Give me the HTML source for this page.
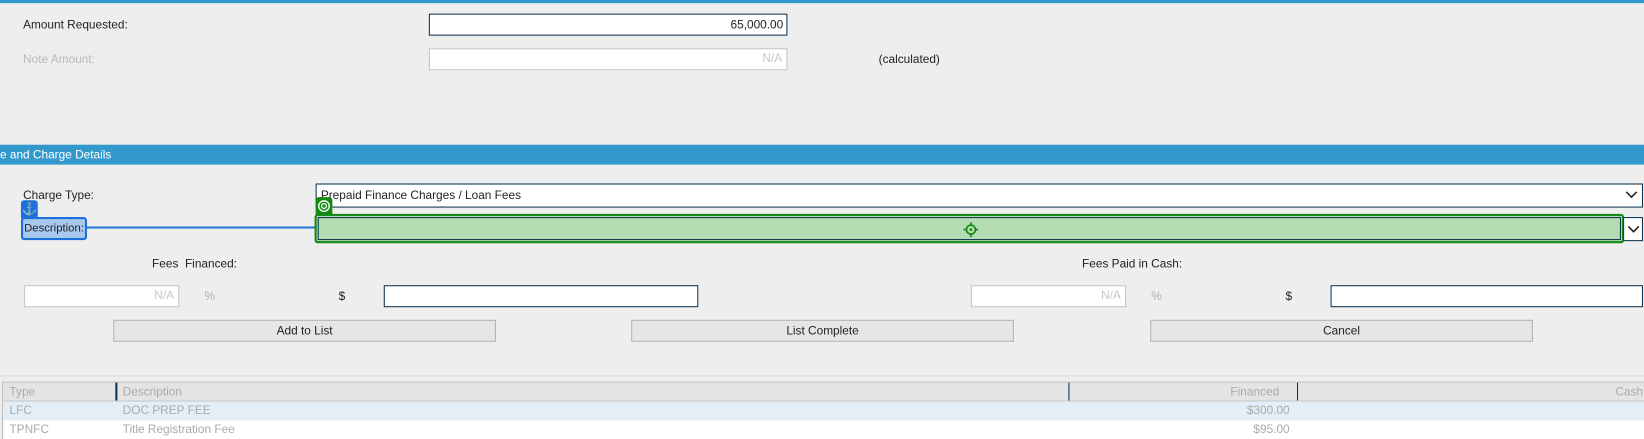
<!DOCTYPE html>
<html><head><style>
html,body{margin:0;padding:0;background:#eeeeee;overflow:hidden;width:1644px;height:437px}
#w{position:absolute;left:0;top:0;width:1568px;height:417px;transform:scale(1.0485);transform-origin:0 0;font-family:"Segoe UI","Liberation Sans",sans-serif;font-size:11.3px;color:#222}
.a{position:absolute}
.in{position:absolute;background:#fff;border:1px solid #0c3350;box-sizing:border-box}
.dis{position:absolute;background:#fff;border:1px solid #c4c4c4;box-sizing:border-box;color:#c8c8c8;text-align:right;padding-right:4px;line-height:19px}
.btn{position:absolute;background:#e6e6e6;border:1px solid #b4b4b4;box-sizing:border-box;text-align:center;line-height:20px;height:21px}
.g{color:#b0b0b0}
</style></head><body><div id="w">
<div class="a" style="left:0;top:0;width:1568px;height:3px;background:#3399cc"></div>
<div class="a" style="left:22px;top:18px">Amount Requested:</div>
<div class="in" style="left:409px;top:13px;width:342px;height:21px;text-align:right;padding-right:3px;line-height:20px">65,000.00</div>
<div class="a" style="left:22px;top:51px;color:#b8b8b8">Note Amount:</div>
<div class="dis" style="left:409px;top:46px;width:342px;height:21px">N/A</div>
<div class="a" style="left:838px;top:51px">(calculated)</div>

<div class="a" style="left:0;top:138px;width:1568px;height:19px;background:#3399cc;color:#fff;line-height:20px">e and Charge Details</div>

<div class="a" style="left:22px;top:181px">Charge Type:</div>
<div class="in" style="left:301px;top:175px;width:1266px;height:23px;line-height:22px;padding-left:4px">Prepaid Finance Charges / Loan Fees
<svg class="a" style="right:4px;top:6px" width="12" height="8"><path d="M1 1 L6 6 L11 1" fill="none" stroke="#222" stroke-width="1.5"/></svg></div>

<div class="a" style="left:83px;top:216px;width:218px;height:2px;background:#2a78d8"></div>
<div class="a" style="left:20px;top:191px;width:16px;height:17px;background:#1e6fd9;border-radius:3px 3px 0 0;color:#fff;text-align:center;font-size:12px;line-height:16px">⚓</div>
<div class="a" style="left:20px;top:207px;width:63px;height:22px;background:#a9c8ee;border:2px solid #1e6fd9;border-radius:3px;box-sizing:border-box;line-height:19px;padding-left:1px;overflow:hidden;white-space:nowrap;font-size:10.8px">Description:</div>

<div class="a" style="left:301px;top:188px;width:16px;height:17px;background:#138a13;border-radius:3px 3px 0 0"><svg width="16" height="17"><circle cx="8" cy="8.5" r="5" fill="none" stroke="#fff" stroke-width="1.3"/><circle cx="8" cy="8.5" r="2.3" fill="none" stroke="#fff" stroke-width="1.2"/></svg></div>
<div class="a" style="left:300px;top:204px;width:1249px;height:28px;border:2px solid #138a13;border-radius:3px;box-sizing:border-box;background:#b3dcb3">
<div class="a" style="left:1px;top:1px;right:1px;bottom:1px;border:1px solid #0c3350"></div>
<svg class="a" style="left:617px;top:6px" width="14" height="14"><circle cx="7" cy="7" r="4.3" fill="none" stroke="#138a13" stroke-width="1.6"/><circle cx="7" cy="7" r="1.3" fill="#138a13"/><path d="M7 0V2.5M7 11.5V14M0 7H2.5M11.5 7H14" stroke="#138a13" stroke-width="1.6"/></svg>
</div>
<div class="in" style="left:1548px;top:207px;width:19px;height:23px"><svg class="a" style="left:3px;top:7px" width="12" height="8"><path d="M1 1 L6 6 L11 1" fill="none" stroke="#222" stroke-width="1.5"/></svg></div>

<div class="a" style="left:145px;top:246px">Fees&nbsp; Financed:</div>
<div class="a" style="left:1032px;top:246px">Fees Paid in Cash:</div>

<div class="dis" style="left:23px;top:272px;width:148px;height:21px">N/A</div>
<div class="a g" style="left:195px;top:277px">%</div>
<div class="a" style="left:323px;top:277px">$</div>
<div class="in" style="left:366px;top:272px;width:300px;height:21px"></div>
<div class="dis" style="left:926px;top:272px;width:148px;height:21px">N/A</div>
<div class="a g" style="left:1098px;top:277px">%</div>
<div class="a" style="left:1226px;top:277px">$</div>
<div class="in" style="left:1269px;top:272px;width:298px;height:21px"></div>

<div class="btn" style="left:108px;top:305px;width:365px">Add to List</div>
<div class="btn" style="left:602px;top:305px;width:365px">List Complete</div>
<div class="btn" style="left:1097px;top:305px;width:365px">Cancel</div>

<div class="a" style="left:0;top:358px;width:1568px;height:1px;background:#d8d8d8"></div>
<div class="a" style="left:2px;top:364px;width:1566px;height:54px;border-left:1px solid #b8b8b8;border-top:1px solid #b8b8b8;background:#fff;color:#aaa">
<div class="a" style="left:0;top:0;width:1566px;height:17px;background:#e4e4e4;border-bottom:1px solid #c4c4c4"></div>
<div class="a" style="left:6px;top:3px">Type</div>
<div class="a" style="left:107px;top:0;width:2px;height:17px;background:#0c3350"></div>
<div class="a" style="left:114px;top:3px">Description</div>
<div class="a" style="left:1016px;top:0;width:1px;height:17px;background:#0c3350"></div>
<div class="a" style="left:1234px;top:0;width:1px;height:17px;background:#0c3350"></div>
<div class="a" style="right:349px;top:3px">Financed</div>
<div class="a" style="right:2px;top:3px">Cash</div>
<div class="a" style="left:0;top:18px;width:1566px;height:18px;background:#e3eef6"></div>
<div class="a" style="left:6px;top:21px">LFC</div>
<div class="a" style="left:114px;top:21px">DOC PREP FEE</div>
<div class="a" style="right:339px;top:21px">$300.00</div>
<div class="a" style="left:6px;top:39px">TPNFC</div>
<div class="a" style="left:114px;top:39px">Title Registration Fee</div>
<div class="a" style="right:339px;top:39px">$95.00</div>
</div>
</div></body></html>
